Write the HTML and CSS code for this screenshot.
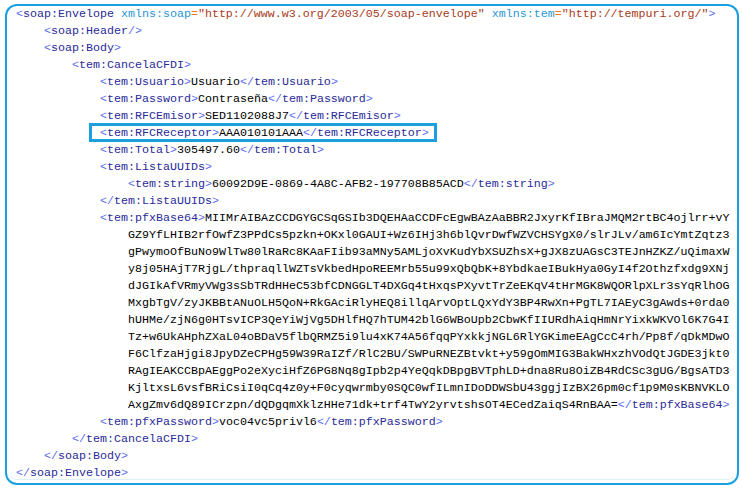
FILE: index.html
```html
<!DOCTYPE html>
<html lang="es">
<head>
    <meta charset="UTF-8">
    <title>CancelaCFDI</title>
    <link rel="stylesheet" href="styles.css">
</head>
<body>

<div class="doc">
    <div class="ln l0"><span class="b">&lt;</span><span class="t">soap:Envelope</span> <span class="a">xmlns:soap</span><span class="e">=</span><span class="v">"http://www.w3.org/2003/05/soap-envelope"</span> <span class="a">xmlns:tem</span><span class="e">=</span><span class="v">"http://tempuri.org/"</span><span class="b">&gt;</span></div>
    <div class="ln l1"><span class="b">&lt;</span><span class="t">soap:Header</span><span class="b">/&gt;</span></div>
    <div class="ln l1"><span class="b">&lt;</span><span class="t">soap:Body</span><span class="b">&gt;</span></div>
    <div class="ln l2"><span class="b">&lt;</span><span class="t">tem:CancelaCFDI</span><span class="b">&gt;</span></div>
    <div class="ln l3"><span class="b">&lt;</span><span class="t">tem:Usuario</span><span class="b">&gt;</span>Usuario<span class="b">&lt;/</span><span class="t">tem:Usuario</span><span class="b">&gt;</span></div>
    <div class="ln l3"><span class="b">&lt;</span><span class="t">tem:Password</span><span class="b">&gt;</span>Contraseña<span class="b">&lt;/</span><span class="t">tem:Password</span><span class="b">&gt;</span></div>
    <div class="ln l3"><span class="b">&lt;</span><span class="t">tem:RFCEmisor</span><span class="b">&gt;</span>SED1102088J7<span class="b">&lt;/</span><span class="t">tem:RFCEmisor</span><span class="b">&gt;</span></div>
    <div class="ln l3"><span class="mark"><span class="b">&lt;</span><span class="t">tem:RFCReceptor</span><span class="b">&gt;</span>AAA010101AAA<span class="b">&lt;/</span><span class="t">tem:RFCReceptor</span><span class="b">&gt;</span></span></div>
    <div class="ln l3"><span class="b">&lt;</span><span class="t">tem:Total</span><span class="b">&gt;</span>305497.60<span class="b">&lt;/</span><span class="t">tem:Total</span><span class="b">&gt;</span></div>
    <div class="ln l3"><span class="b">&lt;</span><span class="t">tem:ListaUUIDs</span><span class="b">&gt;</span></div>
    <div class="ln l4"><span class="b">&lt;</span><span class="t">tem:string</span><span class="b">&gt;</span>60092D9E-0869-4A8C-AFB2-197708B85ACD<span class="b">&lt;/</span><span class="t">tem:string</span><span class="b">&gt;</span></div>
    <div class="ln l3"><span class="b">&lt;/</span><span class="t">tem:ListaUUIDs</span><span class="b">&gt;</span></div>
    <div class="ln l3"><span class="b">&lt;</span><span class="t">tem:pfxBase64</span><span class="b">&gt;</span>MIIMrAIBAzCCDGYGCSqGSIb3DQEHAaCCDFcEgwBAzAaBBR2JxyrKfIBraJMQM2rtBC4ojlrr+vY</div>
    <div class="ln l4">GZ9YfLHIB2rfOwfZ3PPdCs5pzkn+OKxl0GAUI+Wz6IHj3h6blQvrDwfWZVCHSYgX0/slrJLv/am6IcYmtZqtz3</div>
    <div class="ln l4">gPwymoOfBuNo9WlTw80lRaRc8KAaFIib93aMNy5AMLjoXvKudYbXSUZhsX+gJX8zUAGsC3TEJnHZKZ/uQimaxW</div>
    <div class="ln l4">y8j05HAjT7RjgL/thpraqllWZTsVkbedHpoREEMrb55u99xQbQbK+8YbdkaeIBukHya0GyI4f2Othzfxdg9XNj</div>
    <div class="ln l4">dJGIkAfVRmyVWg3sSbTRdHHeC53bfCDNGGLT4DXGq4tHxqsPXyvtTrZeEKqV4tHrMGK8WQORlpXLr3sYqRlhOG</div>
    <div class="ln l4">MxgbTgV/zyJKBBtANuOLH5QoN+RkGAciRlyHEQ8illqArvOptLQxYdY3BP4RwXn+PgTL7IAEyC3gAwds+0rda0</div>
    <div class="ln l4">hUHMe/zjN6g0HTsvICP3QeYiWjVg5DHlfHQ7hTUM42blG6WBoUpb2CbwKfIIURdhAiqHmNrYixkWKVOl6K7G4I</div>
    <div class="ln l4">Tz+w6UkAHphZXaL04oBDaV5flbQRMZ5i9lu4xK74A56fqqPYxkkjNGL6RlYGKimeEAgCcC4rh/Pp8f/qDkMDwO</div>
    <div class="ln l4">F6ClfzaHjgi8JpyDZeCPHg59W39RaIZf/RlC2BU/SWPuRNEZBtvkt+y59gOmMIG3BakWHxzhVOdQtJGDE3jkt0</div>
    <div class="ln l4">RAgIEAKCCBpAEggPo2eXyciHfZ6PG8Nq8gIpb2p4YeQqkDBpgBVTphLD+dna8Ru8OiZB4RdCSc3gUG/BgsATD3</div>
    <div class="ln l4">KjltxsL6vsfBRiCsiI0qCq4z0y+F0cyqwrmby0SQC0wfILmnIDoDDWSbU43ggjIzBX26pm0cf1p9M0sKBNVKLO</div>
    <div class="ln l4">AxgZmv6dQ89ICrzpn/dQDgqmXklzHHe71dk+trf4TwY2yrvtshsOT4ECedZaiqS4RnBAA=<span class="b">&lt;/</span><span class="t">tem:pfxBase64</span><span class="b">&gt;</span></div>
    <div class="ln l3"><span class="b">&lt;</span><span class="t">tem:pfxPassword</span><span class="b">&gt;</span>voc04vc5privl6<span class="b">&lt;/</span><span class="t">tem:pfxPassword</span><span class="b">&gt;</span></div>
    <div class="ln l2"><span class="b">&lt;/</span><span class="t">tem:CancelaCFDI</span><span class="b">&gt;</span></div>
    <div class="ln l1"><span class="b">&lt;/</span><span class="t">soap:Body</span><span class="b">&gt;</span></div>
    <div class="ln l0"><span class="b">&lt;/</span><span class="t">soap:Envelope</span><span class="b">&gt;</span></div>
</div>

</body>
</html>
```

FILE: styles.css
```css
body {
    margin: 0;
    background: #ffffff;
}
.doc {
    box-sizing: border-box;
    width: 734px;
    height: 481px;
    margin: 4px 0 0 5px;
    padding: 0 0 0 9px;
    border: 2px solid #1aa0e0;
    border-radius: 12px;
    box-shadow: inset 0 -3px 0 #ffffff, inset 0 -4px 0 #dcf0fb;
    font-family: "Liberation Mono", "Courier New", monospace;
    font-size: 11.67px;
    line-height: 17px;
    color: #000000;
}
.ln {
    white-space: pre;
    height: 17px;
}
.l1 { padding-left: 28px; }
.l2 { padding-left: 56px; }
.l3 { padding-left: 84px; }
.l4 { padding-left: 112px; }
.b {
    color: #5a6cf0;
}
.t {
    color: #2a2a9a;
}
.a {
    color: #2a96d6;
}
.e {
    color: #f07820;
}
.v {
    color: #a83a1a;
}
.mark {
    position: relative;
}
.mark::after {
    content: "";
    position: absolute;
    top: -3px;
    bottom: -2px;
    left: -11px;
    right: -8px;
    border: 3px solid #1aa0e0;
}
```
